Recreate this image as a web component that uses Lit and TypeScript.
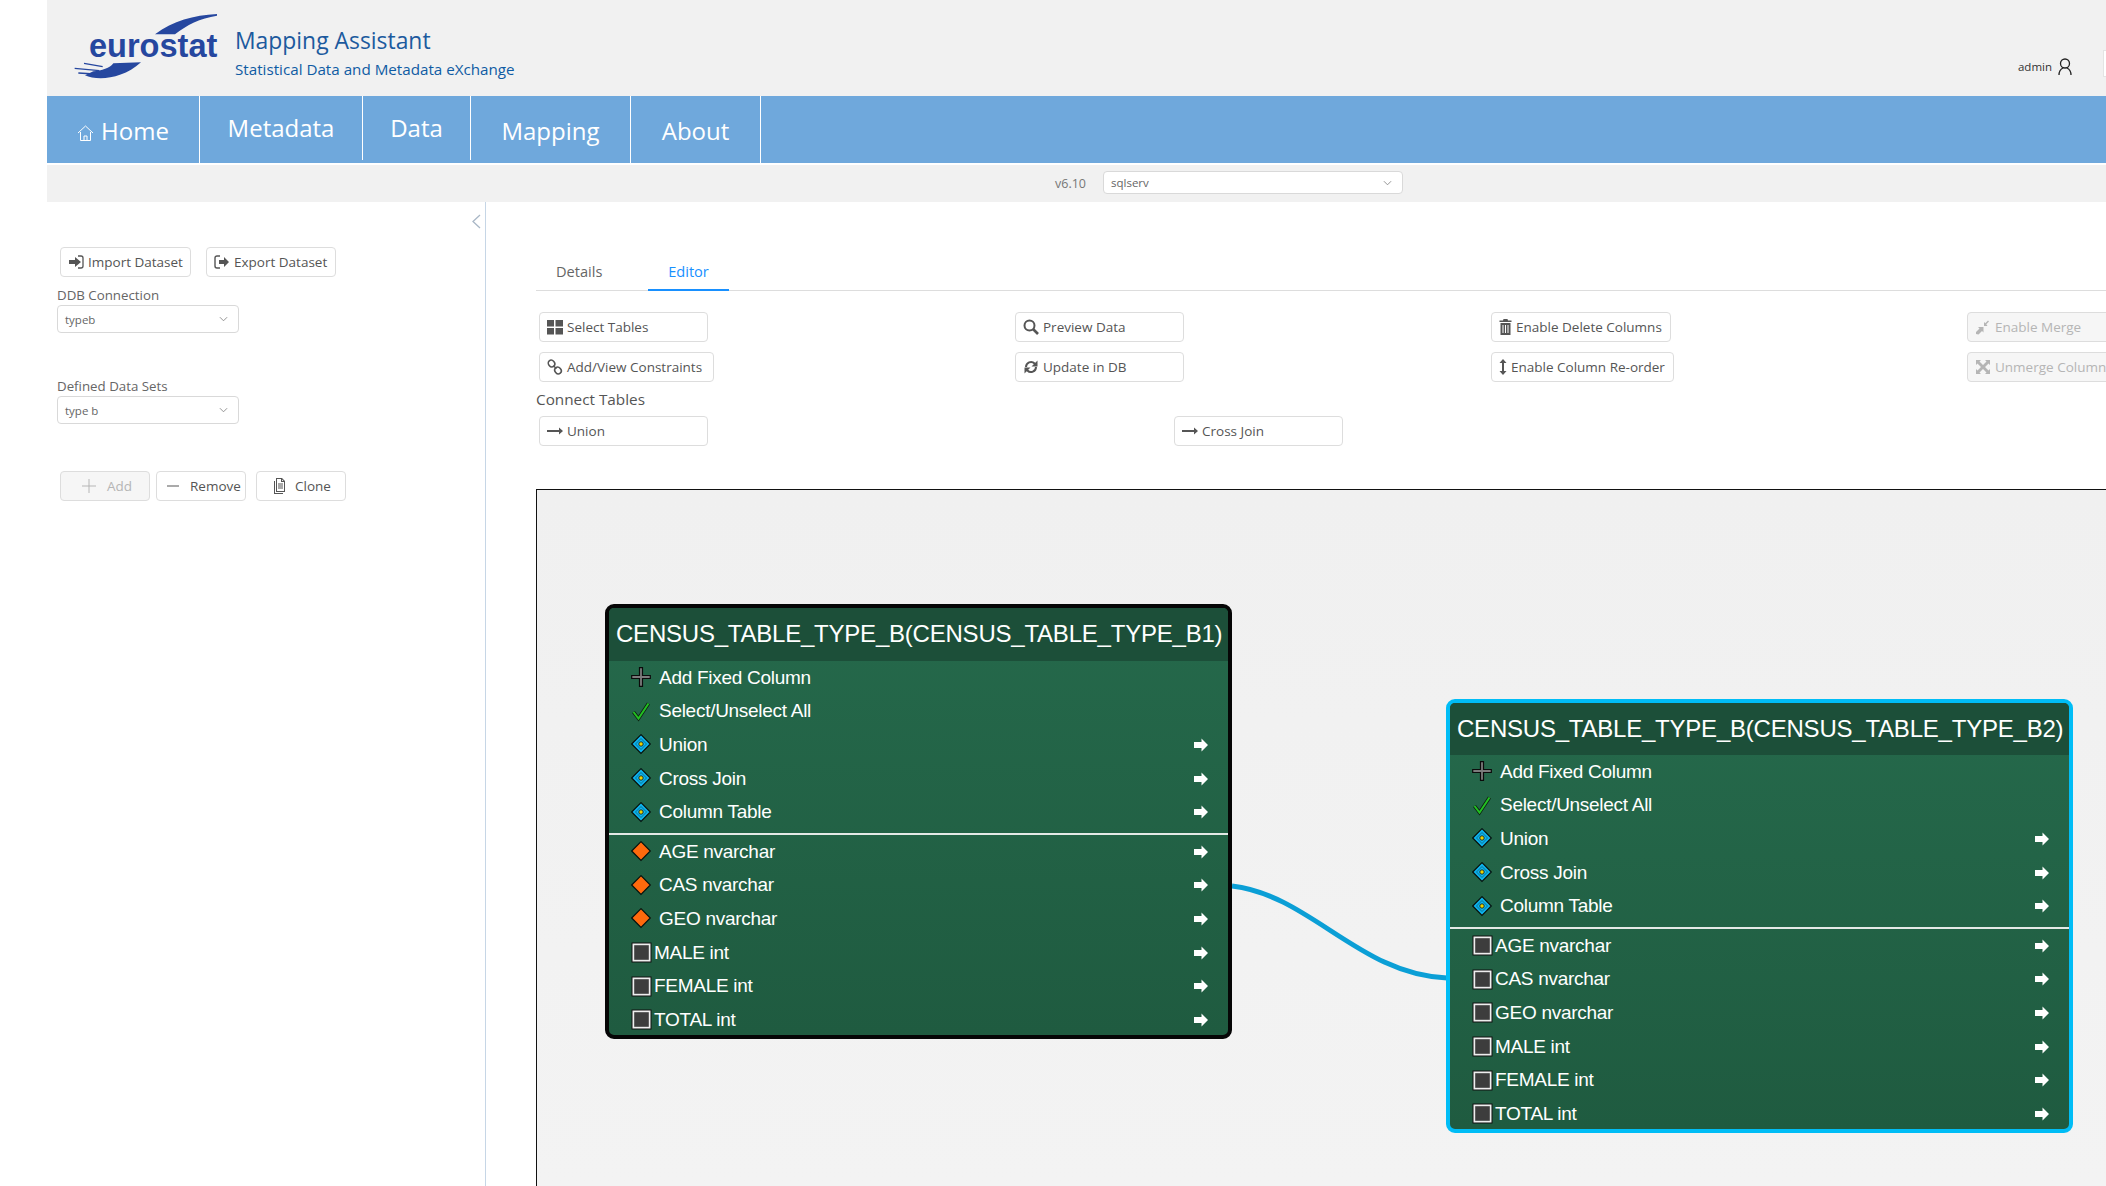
import { LitElement, html, css, svg } from "lit";
import { customElement } from "lit/decorators.js";

const NAV = [
  { label: "Home", width: 153, home: true },
  { label: "Metadata", width: 163, raised: true },
  { label: "Data", width: 108, raised: true },
  { label: "Mapping", width: 160 },
  { label: "About", width: 130 },
];

const ICONS: Record<string, unknown> = {
  import: svg`<path d="M1 6h6V3l6 5-6 5v-3H1z"/><path d="M10 2h3a2 2 0 0 1 2 2v8a2 2 0 0 1-2 2h-3" fill="none" stroke="currentColor" stroke-width="1.3"/>`,
  export: svg`<path d="M6 2H3a2 2 0 0 0-2 2v8a2 2 0 0 0 2 2h3" fill="none" stroke="currentColor" stroke-width="1.4"/><path d="M5 6h5V3l5 5-5 5v-3H5z"/>`,
  plus: svg`<path d="M7.5 1h1v6.5H15v1H8.500V15h-1V8.500H1v-1h6.500z"/>`,
  minus: svg`<path d="M2 7.500h12v1H2z"/>`,
  clone: svg`<path d="M5 0h6l3 3v11H5z M6 1v12h7V4h-3V1z M11 1.500V3h1.500z" fill-rule="evenodd"/><path d="M3 3h1v12h8v1H3z"/><path d="M7 5.500h5v1H7zM7 7.500h5v1H7zM7 9.500h5v1H7z"/>`,
  grid: svg`<path d="M0 1h7v6.500H0zM8.500 1H16v6.500H8.500zM0 9h7v6.500H0zM8.500 9H16v6.500H8.500z"/>`,
  link: svg`<g fill="none" stroke="currentColor" stroke-width="1.600"><ellipse cx="4.500" cy="4.500" rx="3" ry="3.500" transform="rotate(-40 4.500 4.500)"/><ellipse cx="11" cy="11.500" rx="3" ry="3.500" transform="rotate(-40 11 11.500)"/><path d="M6.500 7l3 2.500"/></g>`,
  arrow: svg`<path d="M0 7h12V4.500L16 8l-4 3.500V9H0z"/>`,
  search: svg`<circle cx="6.500" cy="6.500" r="5" fill="none" stroke="currentColor" stroke-width="2"/><path d="M10 10l5 5" stroke="currentColor" stroke-width="2.600" fill="none"/>`,
  refresh: svg`<path d="M2 8a6 6 0 0 1 10.300-4.200L14.500 1.500V7.500H8.500l2.300-2.300A4 4 0 0 0 4 8z"/><path d="M14 8a6 6 0 0 1-10.300 4.200L1.500 14.500V8.500h6l-2.300 2.300A4 4 0 0 0 12 8z"/>`,
  trash: svg`<path d="M6 0h4l.5 1.500H14V3H2V1.500h3.500z"/><path d="M3 4h10v12H3z M5 6v8h1V6z M7.500 6v8h1V6z M10 6v8h1V6z" fill-rule="evenodd"/>`,
  updown: svg`<path d="M8 0l3.500 4H9v8h2.500L8 16l-3.500-4H7V4H4.500z"/>`,
  merge: svg`<path d="M1 15v-2l3.500-3.500L3 8h5.500v5.500L7 12l-3.500 3.500z"/><path d="M9 7V3l1.300 1.300L13 1.500l1 1-2.700 2.800L12.500 7z"/>`,
  unmerge: svg`<path d="M1 1h5L4.500 2.500 8 6l3.500-3.500L10 1h5v5l-1.500-1.500L10 8l3.500 3.500L15 10v5h-5l1.500-1.500L8 10l-3.500 3.500L6 15H1v-5l1.500 1.500L6 8 2.500 4.500 1 6z"/>`,
};

// glyphs that take less room than the usual 16px square
const NARROW: Record<string, [string, number]> = {
  trash: ["1.5 0 13 16", 13],
  updown: ["4 0 8 16", 8],
};

type Btn = { label: string; icon: string; width: number; off?: boolean };

const TOOLS: [Btn, Btn][] = [
  [
    { label: "Select Tables", icon: "grid", width: 169 },
    { label: "Add/View Constraints", icon: "link", width: 175 },
  ],
  [
    { label: "Preview Data", icon: "search", width: 169 },
    { label: "Update in DB", icon: "refresh", width: 169 },
  ],
  [
    { label: "Enable Delete Columns", icon: "trash", width: 180 },
    { label: "Enable Column Re-order", icon: "updown", width: 183 },
  ],
  [
    { label: "Enable Merge", icon: "merge", width: 169, off: true },
    { label: "Unmerge Columns", icon: "unmerge", width: 169, off: true },
  ],
];

const icon = (name: string) => {
  const [box, w] = NARROW[name] ?? ["0 0 16 16", 16];
  return html`<svg class="ico" style="width:${w}px" viewBox=${box} fill="currentColor">${ICONS[name]}</svg>`;
};

const chevron = html`<svg class="chev" viewBox="0 0 10 6"><path d="M1 1l4 4 4-4" fill="none" stroke="#888" stroke-width="1"/></svg>`;

const NODES = [
  {
    title: "CENSUS_TABLE_TYPE_B(CENSUS_TABLE_TYPE_B1)",
    left: 68,
    top: 114,
    active: false,
    cols: [
      ["key", "AGE nvarchar"],
      ["key", "CAS nvarchar"],
      ["key", "GEO nvarchar"],
      ["box", "MALE int"],
      ["box", "FEMALE int"],
      ["box", "TOTAL int"],
    ],
  },
  {
    title: "CENSUS_TABLE_TYPE_B(CENSUS_TABLE_TYPE_B2)",
    left: 909,
    top: 209,
    active: true,
    cols: [
      ["box", "AGE nvarchar"],
      ["box", "CAS nvarchar"],
      ["box", "GEO nvarchar"],
      ["box", "MALE int"],
      ["box", "FEMALE int"],
      ["box", "TOTAL int"],
    ],
  },
];

const ROW_ICONS: Record<string, unknown> = {
  add: svg`<path d="M8.500 .7h3v7.800h7.800v3h-7.800v7.800h-3v-7.800H.7v-3h7.800z" fill="#7c7c7c" stroke="#0b0b0b" stroke-width="1.200"/>`,
  check: svg`<path d="M2.500 11l5 6.500L17.500 2.500" fill="none" stroke="#0c1f10" stroke-width="3.600"/><path d="M2.500 11l5 6.500L17.500 2.500" fill="none" stroke="#22c022" stroke-width="2"/>`,
  join: svg`<path d="M10 .7L19.300 10 10 19.300.7 10z" fill="#0db4ee" stroke="#07130e" stroke-width="1.200"/><path d="M10 4.500L15.500 10 10 15.500 4.500 10z" fill="#0db4ee" stroke="#0b5f78" stroke-width=".8"/><circle cx="10" cy="10" r="2.200" fill="#ecd400" stroke="#10252c" stroke-width=".9"/>`,
  key: svg`<path d="M10 .7L19.300 10 10 19.300.7 10z" fill="#ff6a0d" stroke="#07130e" stroke-width="1.200"/>`,
  box: svg`<rect x=".5" y=".5" width="20" height="20" fill="#111"/><rect x="1.500" y="1.500" width="18" height="18" fill="#eee"/><rect x="3.200" y="3.200" width="14.600" height="14.600" fill="#3d3d3d"/>`,
};

const rowIcon = (name: string) =>
  html`<svg class="row-ico" viewBox="0 0 21 21">${ROW_ICONS[name]}</svg>`;

const rowArrow = html`<svg class="row-arrow" viewBox="0 0 14 14"><path d="M0 4h7.500V.5L14 7l-6.500 6.500V10H0z" fill="#fff"/></svg>`;

@customElement("app-root")
export class AppRoot extends LitElement {
  static styles = css`
    :host {
      display: block;
      width: 2106px;
      height: 1186px;
      overflow: hidden;
      background: #fff;
      font-family: "Open Sans", "Noto Sans", sans-serif;
      color: #555;
    }
    .page {
      margin-left: 47px;
      width: 2059px;
      height: 1186px;
      display: flex;
      flex-direction: column;
    }
    .top {
      height: 96px;
      flex: none;
      background: #f1f1f1;
      display: flex;
      align-items: flex-start;
      position: relative;
    }
    .logo {
      width: 180px;
      height: 90px;
      margin-left: 13px;
      flex: none;
    }
    .logo text {
      font-family: "Liberation Sans", Arial, sans-serif;
      font-weight: 700;
      font-size: 100px;
      fill: #26479f;
    }
    .brand {
      margin-left: -5px;
      padding-top: 25px;
    }
    .brand h1 {
      margin: 0;
      font-weight: 400;
      font-size: 22.900px;
      line-height: 32px;
      color: #1c5a9e;
    }
    .brand p {
      margin: 0;
      font-size: 15.200px;
      line-height: 20px;
      margin-top: 2px;
      color: #0f5ba3;
    }
    .user {
      margin-left: auto;
      margin-right: 34px;
      padding-top: 58px;
      display: flex;
      align-items: center;
      gap: 6px;
      font-size: 11.500px;
      line-height: 18px;
      color: #333;
    }
    .user svg {
      width: 14px;
      height: 18px;
    }
    .edge {
      position: absolute;
      right: 0;
      top: 50px;
      width: 2px;
      height: 25px;
      background: #fff;
      border: 1px solid #e4e4e4;
      border-right: 0;
    }
    .nav {
      height: 67px;
      flex: none;
      background: #6fa8dc;
      display: flex;
    }
    .nav-item {
      height: 67px;
      box-sizing: border-box;
      border-right: 1px solid #fff;
      color: #fff;
      font-size: 24px;
      display: flex;
      align-items: center;
      justify-content: center;
      gap: 7px;
      padding-top: 1px;
    }
    .nav-item.raised {
      height: 64px;
      padding-top: 0;
      padding-bottom: 2px;
    }
    .nav-item svg {
      width: 17px;
      height: 18px;
      margin-top: 5px;
    }
    .bar {
      height: 37px;
      flex: none;
      margin-top: 2px;
      background: #f1f1f1;
      display: flex;
      align-items: center;
      gap: 17px;
      font-size: 12.500px;
      color: #777;
      padding-left: 1008px;
    }
    .bar .select {
      width: 300px;
      height: 23px;
      margin: 0 0 2px;
    }
    .body {
      flex: 1;
      min-height: 0;
      display: flex;
    }
    .side {
      width: 439px;
      flex: none;
      box-sizing: border-box;
      border-right: 1px solid #c6d6e6;
      padding: 45px 0 0 10px;
      position: relative;
    }
    .collapse {
      position: absolute;
      right: 4px;
      top: 12px;
      width: 10px;
      height: 15px;
    }
    .btn-row {
      display: flex;
      padding-left: 3px;
    }
    .btn-row.top-row {
      gap: 15px;
    }
    .btn-row.actions {
      margin-top: 47px;
    }
    .btn {
      box-sizing: border-box;
      height: 30px;
      background: #fff;
      border: 1px solid #ddd;
      border-radius: 4px;
      display: flex;
      align-items: center;
      gap: 4px;
      padding: 0 0 0 7px;
      font-size: 13.500px;
      color: #555;
      white-space: nowrap;
      flex: none;
    }
    .btn.off {
      background: #f6f6f6;
      color: #b5b5b5;
    }
    .btn.w131 {
      width: 131px;
    }
    .btn.w130 {
      width: 130px;
    }
    .btn.add {
      width: 90px;
      padding-left: 20px;
      gap: 10px;
    }
    .btn.remove {
      width: 90px;
      margin-left: 6px;
      padding-left: 8px;
      gap: 9px;
    }
    .btn.clone {
      width: 90px;
      margin-left: 10px;
      padding-left: 14px;
      gap: 8px;
    }
    .ico {
      width: 16px;
      height: 16px;
      flex: none;
    }
    .label {
      font-size: 13.300px;
      line-height: 18px;
      color: #666;
      margin-top: 9px;
    }
    .label.second {
      margin-top: 44px;
    }
    .select {
      box-sizing: border-box;
      width: 182px;
      height: 28px;
      margin-top: 1px;
      border: 1px solid #d9d9d9;
      border-radius: 4px;
      background: #fff;
      display: flex;
      align-items: center;
      justify-content: space-between;
      padding: 0 10px 0 7px;
      font-size: 11.500px;
      color: #666;
    }
    .chev {
      width: 9px;
      height: 6px;
      flex: none;
    }
    .main {
      flex: 1;
      min-width: 0;
      padding: 0 0 0 50px;
      display: flex;
      flex-direction: column;
    }
    .tabs {
      margin-top: 35px;
      height: 54px;
      flex: none;
      box-sizing: border-box;
      border-bottom: 1px solid #ddd;
      display: flex;
      align-items: flex-start;
      font-size: 14.600px;
    }
    .tab {
      box-sizing: border-box;
      height: 54px;
      padding-top: 24px;
      line-height: 20px;
    }
    .tab.details {
      width: 112px;
      padding-left: 20px;
      color: #666;
    }
    .tab.editor {
      width: 81px;
      text-align: center;
      color: #1890ff;
      border-bottom: 2px solid #1890ff;
    }
    .tools {
      display: grid;
      grid-template-columns: repeat(4, 476px);
      margin-top: 21px;
      padding-left: 3px;
    }
    .tool-col {
      display: flex;
      flex-direction: column;
      gap: 10px;
    }
    .connect-title {
      font-size: 15.300px;
      line-height: 20px;
      margin-top: 7px;
      color: #555;
    }
    .connect {
      display: grid;
      grid-template-columns: repeat(3, 635px);
      padding-left: 3px;
      margin-top: 7px;
    }
    .canvas {
      position: relative;
      margin-top: 43px;
      flex: 1;
      min-height: 0;
      width: 1700px;
      background: linear-gradient(#f0f0f0, #f3f3f3);
      border: 1px solid #111;
      border-right: 0;
      border-bottom: 0;
      overflow: hidden;
    }
    .wire {
      position: absolute;
      left: 0;
      top: 0;
      width: 1700px;
      height: 800px;
    }
    .node {
      position: absolute;
      box-sizing: border-box;
      width: 627px;
      height: 434px;
      border: 4px solid #060606;
      border-radius: 9px;
      background: linear-gradient(#25694b, #1f5b40);
      overflow: hidden;
      font-family: "Liberation Sans", Arial, sans-serif;
      color: #fff;
    }
    .node.active {
      border-color: #00bdf6;
    }
    .node:not(.active) {
      height: 435px;
    }
    .node-title {
      height: 52px;
      background: #1c4f39;
      font-size: 24px;
      line-height: 52px;
      padding-left: 7px;
      white-space: nowrap;
      letter-spacing: -0.220px;
    }
    .node:not(.active) .node-title {
      height: 53px;
    }
    .row {
      height: 33.600px;
      display: flex;
      align-items: center;
      padding: 0 20px 0 22px;
      font-size: 19px;
      white-space: nowrap;
      letter-spacing: -0.280px;
    }
    .row-ico {
      width: 21px;
      height: 21px;
      flex: none;
      margin-right: 7px;
    }
    .row.box .row-ico {
      margin-right: 2px;
    }
    .row-arrow {
      width: 14px;
      height: 14px;
      margin-left: auto;
    }
    .node-sep {
      height: 2px;
      margin: 4px 0 0;
      background: #e4e9e6;
    }
  `;

  private renderNode(n: (typeof NODES)[number]) {
    const tools = [
      ["add", "Add Fixed Column", false],
      ["check", "Select/Unselect All", false],
      ["join", "Union", true],
      ["join", "Cross Join", true],
      ["join", "Column Table", true],
    ] as const;
    return html`
      <div class="node ${n.active ? "active" : ""}" style="left:${n.left}px;top:${n.top}px">
        <div class="node-title">${n.title}</div>
        <div>
          ${tools.map(
            ([ic, label, arrow]) => html`
              <div class="row">${rowIcon(ic)}<span>${label}</span>${arrow ? rowArrow : ""}</div>
            `,
          )}
        </div>
        <div class="node-sep"></div>
        <div>
          ${n.cols.map(
            ([ic, label]) => html`
              <div class="row ${ic}">${rowIcon(ic)}<span>${label}</span>${rowArrow}</div>
            `,
          )}
        </div>
      </div>
    `;
  }

  render() {
    return html`
      <div class="page">
        <header class="top">
          <svg class="logo" viewBox="0 0 540 270" role="img">
            <path d="M285 103C340 62 400 46 471 42V47C420 55 380 75 345 103Z" fill="#26479f" />
            <text x="87" y="171" textLength="385" lengthAdjust="spacingAndGlyphs">eurostat</text>
            <path d="M243 187L160 190C150 205 125 212 100 214L75 226C110 242 185 240 243 187Z" fill="#26479f" />
            <path d="M72 190L128 200M44 205L118 212M55 219L104 222" stroke="#26479f" stroke-width="4" fill="none" />
          </svg>
          <div class="brand">
            <h1>Mapping Assistant</h1>
            <p>Statistical Data and Metadata eXchange</p>
          </div>
          <div class="user">
            <span>admin</span>
            <svg viewBox="0 0 14 18" fill="none" stroke="#222" stroke-width="1.300">
              <circle cx="7" cy="5.500" r="4.500" />
              <path d="M1 17c0-4 2-6 4-7M13 17c0-4-2-6-4-7" />
            </svg>
          </div>
          <div class="edge"></div>
        </header>
        <nav class="nav">
          ${NAV.map(
            (item) => html`
              <div class="nav-item ${item.raised ? "raised" : ""}" style="width:${item.width}px">
                ${item.home
                  ? html`<svg viewBox="0 0 17 18" fill="none" stroke="#fff" stroke-width="1">
                      <path d="M1 9l7.500-7L16 9M3.500 8v8.500h10V8M7 16.500V12h3v4.500" />
                    </svg>`
                  : ""}
                <span>${item.label}</span>
              </div>
            `,
          )}
        </nav>
        <div class="bar">
          <span>v6.10</span>
          <div class="select"><span>sqlserv</span>${chevron}</div>
        </div>
        <div class="body">
          <aside class="side">
            <svg class="collapse" viewBox="0 0 10 15"><path d="M9 1L2 7.500 9 14" fill="none" stroke="#a9b7c6" stroke-width="1.300"/></svg>
            <div class="btn-row top-row">
              <div class="btn w131">${icon("import")}Import Dataset</div>
              <div class="btn w130">${icon("export")}Export Dataset</div>
            </div>
            <div class="label">DDB Connection</div>
            <div class="select"><span>typeb</span>${chevron}</div>
            <div class="label second">Defined Data Sets</div>
            <div class="select"><span>type b</span>${chevron}</div>
            <div class="btn-row actions">
              <div class="btn off add">${icon("plus")}Add</div>
              <div class="btn remove">${icon("minus")}Remove</div>
              <div class="btn clone">${icon("clone")}Clone</div>
            </div>
          </aside>
          <main class="main">
            <div class="tabs">
              <div class="tab details">Details</div>
              <div class="tab editor">Editor</div>
            </div>
            <div class="tools">
              ${TOOLS.map(
                (col) => html`
                  <div class="tool-col">
                    ${col.map(
                      (b) => html`<div class="btn ${b.off ? "off" : ""}" style="width:${b.width}px">${icon(b.icon)}${b.label}</div>`,
                    )}
                  </div>
                `,
              )}
            </div>
            <div class="connect-title">Connect Tables</div>
            <div class="connect">
              <div class="btn" style="width:169px">${icon("arrow")}Union</div>
              <div class="btn" style="width:169px">${icon("arrow")}Cross Join</div>
            </div>
            <div class="canvas">
              <svg class="wire" viewBox="0 0 1700 800">
                <path d="M695 396C773 405 823 485 910 488" fill="none" stroke="#0b9fd6" stroke-width="5" />
              </svg>
              ${NODES.map((n) => this.renderNode(n))}
            </div>
          </main>
        </div>
      </div>
    `;
  }
}
